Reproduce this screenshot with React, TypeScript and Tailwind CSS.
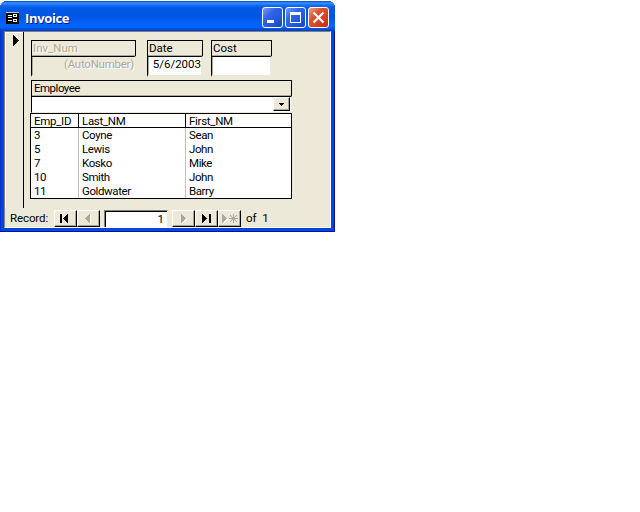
import React from "react";

const sans = "font-[Roboto,'Liberation_Sans',sans-serif] text-[11.5px] leading-[14px] whitespace-pre text-black";

function Field({ label, value, box, disabled = false }: { label: string; value: string; box: string; disabled?: boolean }) {
  const tone = disabled ? "text-[#aca899] [text-shadow:1px_1px_0_#fff]" : "";
  return (
    <div className={`${box} shrink-0`}>
      <div className={`h-4 border border-b-0 border-black pl-px shadow-[inset_0_-1px_0_#aca899] ${tone}`}>{label}</div>
      <div className={`h-[21px] border-2 border-t border-l border-[#ece9d8] border-t-black border-l-black text-right shadow-[inset_1px_0_0_#aca899] ${disabled ? "tracking-[-0.25px]" : "bg-white"} ${tone}`}>{value}</div>
    </div>
  );
}

function NavButton({ children, box = "w-[23px]" }: { children: React.ReactNode; box?: string }) {
  return (
    <div className={`${box} h-[17px] shrink-0 border border-t-white border-l-white border-b-black border-r-black bg-[#ece9d8] shadow-[inset_-1px_-1px_0_#aca899]`}>
      <svg className="block h-[15px] w-full" viewBox="0 0 21 15" shapeRendering="crispEdges">{children}</svg>
    </div>
  );
}

const rows = [
  ["3", "Coyne", "Sean"],
  ["5", "Lewis", "John"],
  ["7", "Kosko", "Mike"],
  ["10", "Smith", "John"],
  ["11", "Goldwater", "Barry"],
];

export default function App() {
  return (
    <main className={`h-[512px] w-[640px] overflow-hidden bg-white pt-px ${sans}`}>
      <section className="h-[231px] w-[335px] rounded-t-[7px] bg-[#0046e0] shadow-[inset_-1px_-1px_0_#001590,inset_1px_0_0_#0830c8]">
        <header className="flex h-[30px] items-center rounded-t-[7px] bg-[linear-gradient(180deg,#0048c8_0px,#3b91fb_2px,#1670f4_4px,#0058e6_7px,#0055e5_16px,#0262fb_22px,#0265ff_26px,#0052df_28px,#003bc0_30px)] pl-[6px] pt-[3px]">
          <svg className="h-[12px] w-[13px]" viewBox="0 0 13 12" shapeRendering="crispEdges">
            <path fill="#000" d="M0 0h13v12H0z" />
            <path fill="#c8c8c8" d="M0 0h13v1H0z" />
            <path fill="#fff" d="M2 3h4v1H2zM2 5h4v1H2zM2 8h4v1H2zM7 2h4v3H7zM7 7h4v3H7z" />
            <path fill="#000" d="M8 3h2v1H8zM8 8h2v1H8z" />
          </svg>
          <h1 className="ml-[6px] font-['Open_Sans',sans-serif] text-[13px] font-bold leading-[18px] tracking-[-0.35px] text-white [text-shadow:1px_1px_0_#0a1883]">Invoice</h1>
          <div className="ml-auto mr-[6px] flex gap-[2px]">
            {["min", "max", "close"].map((kind) => (
              <div key={kind} className={`h-[21px] w-[21px] rounded-[3px] border border-white ${kind === "close" ? "bg-[linear-gradient(135deg,#f0a084,#e0522f_35%,#d5401b_70%,#b93510)]" : "bg-[linear-gradient(135deg,#7c9ff4,#3164e8_35%,#2257dc_70%,#1746be)]"}`}>
                <svg viewBox="0 0 19 19" className="h-[19px] w-[19px]" fill="none" stroke="#fff">
                  {kind === "min" && <path strokeWidth="3" d="M4 13.5h7" />}
                  {kind === "max" && <path d="M4.5 4v11M14.5 4v11M4 14.5h11M4 4.5h11M4 5.5h11M4 6.5h11" />}
                  {kind === "close" && <path strokeWidth="2.2" d="m4.5 4.5 10 10m0-10-10 10" />}
                </svg>
              </div>
            ))}
          </div>
        </header>

        <div className="mx-auto flex h-[197px] w-[327px] flex-col border border-[#808080] border-r-white border-b-white bg-[#ece9d8]">
          <div className="flex h-[176px]">
            <aside className="w-[19px] border-r border-black pl-[8px] pt-[3px] shadow-[inset_1px_1px_0_#fff]">
              <svg className="h-[11px] w-[6px]" viewBox="0 0 6 11" shapeRendering="crispEdges"><path d="M0 0h1v11H0zM1 1h1v9H1zM2 2h1v7H2zM3 3h1v5H3zM4 4h1v3H4zM5 5h1v1H5z" /></svg>
            </aside>
            <div className="ml-[6px] w-[263px] pt-2">
              <div className="flex">
                <Field label="Inv_Num" value="(AutoNumber)" box="ml-px w-[105px]" disabled />
                <Field label="Date" value="5/6/2003" box="ml-[11px] w-[56px]" />
                <Field label="Cost" value="" box="ml-[8px] w-[61px]" />
              </div>
              <div className="ml-px mt-[3px] w-[261px]">
                <div className="h-4 border border-b-0 border-black pl-[2px] tracking-[-0.5px] shadow-[inset_0_-1px_0_#aca899]">Employee</div>
                <div className="flex h-[17px] justify-end border border-t-black border-l-black border-b-[#ece9d8] border-r-[#ece9d8] bg-white pr-px">
                  <div className="flex h-[14px] w-[17px] items-center justify-center border border-t-white border-l-white border-b-black border-r-black bg-[#ece9d8] shadow-[inset_-1px_-1px_0_#aca899]">
                    <svg className="h-[3px] w-[5px]" viewBox="0 0 5 3" shapeRendering="crispEdges"><path d="M0 0h5v1H0zM1 1h3v1H1zM2 2h1v1H2z" /></svg>
                  </div>
                </div>
              </div>
              <div className="h-[86px] w-[262px] border border-black bg-white">
                <div className="grid h-[14px] grid-cols-[48px_107px_1fr] border-b border-black tracking-[-0.3px]">
                  <span className="border-r border-black pl-[3px]">Emp_ID</span>
                  <span className="border-r border-black pl-[3px]">Last_NM</span>
                  <span className="pl-[3px]">First_NM</span>
                </div>
                {rows.map((r) => (
                  <div key={r[0]} className="grid h-[14px] grid-cols-[48px_107px_1fr] tracking-[-0.4px]">
                    <span className="border-r border-[#c0c0c0] pl-[3px]">{r[0]}</span>
                    <span className="border-r border-[#c0c0c0] pl-[3px]">{r[1]}</span>
                    <span className="pl-[3px]">{r[2]}</span>
                  </div>
                ))}
              </div>
            </div>
          </div>

          <footer className="flex h-[19px] items-start pl-[5px] pt-[2px]">
            <span className="w-[44px] pt-px tracking-[-0.1px]">Record:</span>
            <NavButton>
              <path d="M5 3h2v9H5zM13 3v9L8 7.5z" />
            </NavButton>
            <NavButton>
              <path fill="#fff" d="M13 4v9L8 8.5z" /><path fill="#aca899" d="M12 3v9L7 7.5z" />
            </NavButton>
            <div className="ml-[4px] h-[17px] w-[64px] border border-b-0 border-t-[#808080] border-l-[#808080] border-r-[#ece9d8] bg-white pr-[3px] pt-px text-right shadow-[inset_1px_1px_0_#000]">1</div>
            <NavButton box="ml-[4px] w-[23px]">
              <path fill="#fff" d="M9 4v9l5-4.5z" /><path fill="#aca899" d="M8 3v9l5-4.5z" />
            </NavButton>
            <NavButton>
              <path d="M6 3v9l5-4.5zM13 3h2v9h-2z" />
            </NavButton>
            <NavButton>
              <path fill="#fff" d="M4 4v9l5-4.5z" /><path fill="#aca899" d="M3 3v9l5-4.5z" />
              <path stroke="#aca899" d="M14.5 3v9M10 7.5h9M11 4l7 7M18 4l-7 7" />
            </NavButton>
            <span className="pl-[5px] pt-px">{"of  1"}</span>
          </footer>
        </div>
      </section>
    </main>
  );
}
